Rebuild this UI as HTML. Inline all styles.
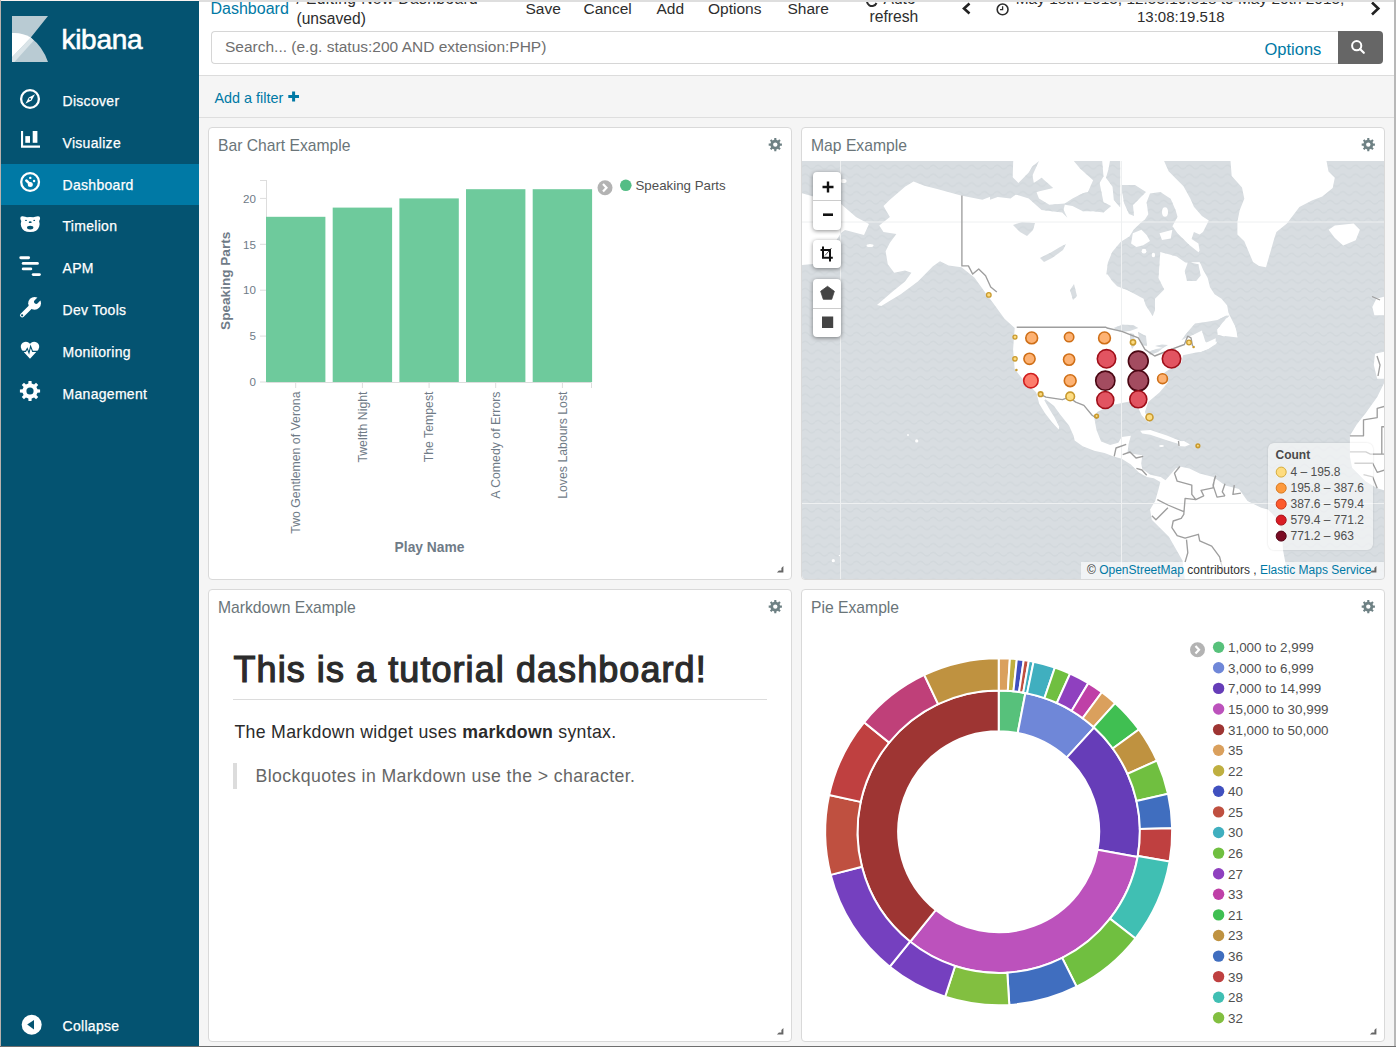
<!DOCTYPE html>
<html><head><meta charset="utf-8">
<style>
*{box-sizing:border-box;margin:0;padding:0}
html,body{width:1396px;height:1047px;overflow:hidden;background:#f5f5f5;font-family:"Liberation Sans",sans-serif;position:relative}
.abs{position:absolute}
#edgeL{left:0;top:0;width:1px;height:1047px;background:#b9b1ad}
#edgeT{left:0;top:0;width:1396px;height:1px;background:#fbf3f1}
#edgeR{left:1394px;top:0;width:2px;height:1047px;background:#b8b8b8}
#edgeB{left:0;top:1046px;width:1396px;height:1px;background:#6e6e6e}
#nav{left:1px;top:1px;width:198px;height:1045px;background:#045371}
.ni{position:absolute;left:0;width:198px;height:42px}
.ni .t{position:absolute;left:62px;font-size:14px;color:#fff;white-space:nowrap;line-height:16px}
.ni svg{position:absolute;left:19px}
#active{left:1px;top:164px;width:198px;height:41px;background:#0079a5}
#top{left:199px;top:1px;width:1195px;height:75px;background:#fff;border-bottom:1px solid #dcdcdc}
.txt{position:absolute;white-space:nowrap;line-height:1}
.nvt{left:62.5px;font-size:14px;color:#fff;letter-spacing:0.3px;-webkit-text-stroke:0.25px #fff}
.tm{top:0.5px;font-size:15.5px;color:#2d2d2d}
.mctl{background:#fff;border-radius:4px;box-shadow:0 1px 4px rgba(0,0,0,0.45)}
.panel{position:absolute;background:#fff;border:1px solid #d9d9d9;border-radius:4px;overflow:hidden}
.ptitle{position:absolute;left:9px;top:9px;font-size:15.7px;color:#6a7579;white-space:nowrap}
.gear{position:absolute;top:10px}
.resz{position:absolute;width:5px;height:5px;border-right:2px solid #666;border-bottom:2px solid #666}
</style></head><body>
<div id="edgeT" class="abs"></div>
<div id="edgeL" class="abs"></div>
<div id="edgeR" class="abs"></div>
<div id="edgeB" class="abs"></div>

<!-- NAV -->
<div id="nav" class="abs"></div>
<div id="active" class="abs"></div>

<svg class="abs" style="left:12px;top:16px" width="36" height="46" viewBox="0 0 36 46">
  <path d="M0,0 H36 L18.8,21.5 Q31,31 36,46 H0 Z" fill="#b9cbd3"/>
  <path d="M0,17 Q10,16.2 18.8,21.5 L0,41.3 Z" fill="#ffffff"/>
  <path d="M18.8,21.5 L21.8,24.6 L2.4,46 H0 V41.3 Z" fill="#dae4e8"/>
</svg>
<div class="txt" style="left:61.5px;top:26px;font-size:28px;color:#fff;letter-spacing:-0.3px;-webkit-text-stroke:0.6px #fff">kibana</div>

<!-- discover -->
<svg class="abs" style="left:18px;top:87px" width="24" height="24" viewBox="0 0 24 24">
  <circle cx="12" cy="12" r="8.9" fill="none" stroke="#fff" stroke-width="2.3"/>
  <path d="M7.4,16.7 L10.8,10.57 L17,7.35 L13.6,13.43 Z" fill="#fff"/>
  <circle cx="12" cy="12" r="1" fill="#045371"/>
</svg>
<!-- visualize -->
<svg class="abs" style="left:18px;top:129px" width="24" height="24" viewBox="0 0 24 24">
  <path d="M3,2 H5.1 V16.5 H22 V18.8 H3 Z" fill="#fff"/>
  <rect x="7.3" y="7.1" width="4.7" height="6.7" fill="#fff"/>
  <rect x="14.7" y="2" width="4.7" height="11.8" fill="#fff"/>
</svg>
<!-- dashboard -->
<svg class="abs" style="left:18px;top:170px" width="24" height="24" viewBox="0 0 24 24">
  <circle cx="12.1" cy="12" r="8.9" fill="none" stroke="#fff" stroke-width="2.3"/>
  <path d="M8.3,10.5 L12.3,14.3" stroke="#fff" stroke-width="2.5" stroke-linecap="round"/>
  <circle cx="12.3" cy="14.6" r="2.5" fill="#fff"/>
  <circle cx="12.3" cy="7.9" r="1.2" fill="#fff"/>
  <circle cx="16.1" cy="11" r="1.2" fill="#fff"/>
</svg>
<!-- timelion -->
<svg class="abs" style="left:18px;top:212px" width="24" height="24" viewBox="0 0 24 24">
  <path d="M2.3,6.2 Q2.2,4 4.6,4.2 Q7.5,4.5 9,5.3 Q12,4.5 15.3,5.3 Q17,4.5 19.8,4.2 Q22.2,4 22.1,6.2 Q22,7.8 21.1,9 Q22,11.5 21.2,14.4 Q19.5,19.9 12.2,20.1 Q4.9,19.9 3.2,14.4 Q2.4,11.5 3.3,9 Q2.4,7.8 2.3,6.2 Z" fill="#fff"/>
  <ellipse cx="8" cy="8.4" rx="0.9" ry="0.6" fill="#045371"/>
  <ellipse cx="16.2" cy="8.4" rx="0.9" ry="0.6" fill="#045371"/>
  <ellipse cx="12.2" cy="10.2" rx="1.5" ry="0.9" fill="#045371"/>
  <ellipse cx="12.2" cy="15.6" rx="3.2" ry="1.9" fill="#045371"/>
</svg>
<!-- apm -->
<svg class="abs" style="left:18px;top:254px" width="24" height="24" viewBox="0 0 24 24">
  <g stroke="#fff" stroke-width="2.9" stroke-linecap="round">
  <path d="M2.8,3.7 H10.6"/><path d="M5.2,9.4 H19.4"/><path d="M5.2,14.9 H12.8"/><path d="M15.2,20.6 H21.4"/>
  </g>
</svg>
<!-- dev tools -->
<svg class="abs" style="left:18px;top:295px" width="24" height="24" viewBox="0 0 24 24">
  <path d="M4.2,20.2 L13.5,11" stroke="#fff" stroke-width="4.4" stroke-linecap="round"/>
  <circle cx="16.6" cy="8.3" r="6.4" fill="#fff"/>
  <path d="M18.2,6.7 L24,0.9" stroke="#045371" stroke-width="4.2" stroke-linecap="round"/>
  <circle cx="4.1" cy="20.3" r="1.1" fill="#045371"/>
</svg>
<!-- monitoring -->
<svg class="abs" style="left:18px;top:339px" width="24" height="24" viewBox="0 0 24 24">
  <path d="M12,4.7 Q9.5,2 6.5,2.9 Q2.4,4 2.8,8.3 Q3.2,11 5.5,12.7 L12,19.8 L18.5,12.7 Q20.8,11 21.2,8.3 Q21.6,4 17.5,2.9 Q14.5,2 12,4.7 Z" fill="#fff"/>
  <path d="M3.5,12.4 H7.6 L9.3,9.5 L11,14 L12.6,7.4 L14.6,12.4 H20.5" fill="none" stroke="#045371" stroke-width="1.1"/>
</svg>
<!-- management -->
<svg class="abs" style="left:18px;top:379px" width="24" height="24" viewBox="0 0 24 24">
  <path d="M10.33,4.58 L10.47,1.91 L13.53,1.91 L13.67,4.58 L16.07,5.58 L18.05,3.79 L20.21,5.95 L18.42,7.93 L19.42,10.33 L22.09,10.47 L22.09,13.53 L19.42,13.67 L18.42,16.07 L20.21,18.05 L18.05,20.21 L16.07,18.42 L13.67,19.42 L13.53,22.09 L10.47,22.09 L10.33,19.42 L7.93,18.42 L5.95,20.21 L3.79,18.05 L5.58,16.07 L4.58,13.67 L1.91,13.53 L1.91,10.47 L4.58,10.33 L5.58,7.93 L3.79,5.95 L5.95,3.79 L7.93,5.58 Z M12,8.4 A3.6,3.6 0 1 0 12,15.6 A3.6,3.6 0 1 0 12,8.4 Z" fill="#fff" fill-rule="evenodd"/>
</svg>
<div class="txt nvt" style="top:93.6px">Discover</div>
<div class="txt nvt" style="top:135.5px">Visualize</div>
<div class="txt nvt" style="top:178.3px">Dashboard</div>
<div class="txt nvt" style="top:219.2px">Timelion</div>
<div class="txt nvt" style="top:261.0px">APM</div>
<div class="txt nvt" style="top:302.9px">Dev Tools</div>
<div class="txt nvt" style="top:344.7px">Monitoring</div>
<div class="txt nvt" style="top:386.6px">Management</div>
<svg class="abs" style="left:21px;top:1014px" width="22" height="22" viewBox="0 0 22 22"><circle cx="10.7" cy="10.8" r="10" fill="#fff"/><path d="M6.2,10.6 L13,5.9 V15.4 Z" fill="#045371"/></svg>
<div class="txt nvt" style="top:1018.8px">Collapse</div>


<!-- TOP -->
<div id="top" class="abs"></div>
<div class="txt" style="left:210.5px;top:0.5px;font-size:16px;color:#0079a5">Dashboard</div>
<div class="txt" style="left:296.5px;top:-9.3px;font-size:15.6px;color:#2d2d2d;letter-spacing:0.4px">/ Editing New Dashboard</div>
<div class="txt" style="left:296.5px;top:10.5px;font-size:15.6px;color:#2d2d2d">(unsaved)</div>
<div class="txt tm" style="left:525.5px">Save</div>
<div class="txt tm" style="left:583.5px">Cancel</div>
<div class="txt tm" style="left:656.5px">Add</div>
<div class="txt tm" style="left:708px">Options</div>
<div class="txt tm" style="left:787.5px">Share</div>
<svg class="abs" style="left:865px;top:-6px" width="14" height="14" viewBox="0 0 14 14"><path d="M10.5,3.5 A5,5 0 1 0 11.5,9" fill="none" stroke="#2d2d2d" stroke-width="2"/></svg>
<div class="txt" style="left:883.5px;top:-9px;font-size:15.6px;color:#2d2d2d">Auto-</div>
<div class="txt" style="left:869.5px;top:8.5px;font-size:15.7px;color:#2d2d2d">refresh</div>
<svg class="abs" style="left:960px;top:2px" width="13" height="13" viewBox="0 0 13 13"><path d="M9.5,1.5 L4,6.5 L9.5,11.5" fill="none" stroke="#222" stroke-width="2.6"/></svg>
<svg class="abs" style="left:995px;top:2px" width="15" height="15" viewBox="0 0 15 15"><circle cx="7.6" cy="7.4" r="5.4" fill="none" stroke="#2d2d2d" stroke-width="1.6"/><path d="M7.6,4.2 V7.6 H5" fill="none" stroke="#2d2d2d" stroke-width="1.3"/></svg>
<div class="txt" style="left:1015.7px;top:-9px;font-size:15.45px;color:#2d2d2d">May 18th 2015, 12:53:19.518 to May 20th 2015,</div>
<div class="txt" style="left:1137px;top:8.5px;font-size:15px;color:#2d2d2d">13:08:19.518</div>
<svg class="abs" style="left:1369px;top:1px" width="13" height="15" viewBox="0 0 13 15"><path d="M3,1.5 L9.3,7.5 L3,13.5" fill="none" stroke="#222" stroke-width="2.6"/></svg>
<div class="abs" style="left:210.5px;top:31px;width:1128px;height:33px;border:1px solid #d6d6d6;border-right:none;border-radius:4px 0 0 4px;background:#fff"></div>
<div class="txt" style="left:225px;top:38.5px;font-size:15.5px;color:#6f6f6f">Search... (e.g. status:200 AND extension:PHP)</div>
<div class="txt" style="left:1264.5px;top:40.5px;font-size:16.5px;color:#0079a5">Options</div>
<div class="abs" style="left:1338px;top:31px;width:45px;height:33px;background:#666;border-radius:0 4px 4px 0"></div>
<svg class="abs" style="left:1350px;top:39px" width="18" height="18" viewBox="0 0 18 18"><circle cx="6.7" cy="6.7" r="4.6" fill="none" stroke="#fff" stroke-width="2"/><path d="M10,10 L13.8,13.8" stroke="#fff" stroke-width="2.2" stroke-linecap="round"/></svg>

<div class="abs" style="left:199px;top:0;width:1195px;height:1.5px;background:#dedede"></div>
<!-- FILTER BAR -->
<div class="abs" style="left:199px;top:117px;width:1195px;height:1px;background:#dedede"></div>
<div class="txt" style="left:214.5px;top:91px;font-size:14.4px;color:#0079a5">Add a filter</div>
<svg class="abs" style="left:288px;top:91px" width="12" height="11" viewBox="0 0 12 11"><path d="M5.6,0.5 V10.5 M0.3,5.5 H11" stroke="#0079a5" stroke-width="3"/></svg>

<!-- PANELS -->
<div class="panel" id="p1" style="left:208px;top:127px;width:584px;height:453px">
  <div class="ptitle">Bar Chart Example</div>
</div>
<div class="panel" id="p2" style="left:801px;top:127px;width:584px;height:453px">
  <div class="ptitle">Map Example</div>
</div>
<div class="panel" id="p3" style="left:208px;top:589px;width:584px;height:453px">
  <div class="ptitle">Markdown Example</div>
</div>
<div class="panel" id="p4" style="left:801px;top:589px;width:584px;height:453px">
  <div class="ptitle">Pie Example</div>
</div>
<!-- MAP START -->
<div class="abs" style="left:802px;top:161px;width:582px;height:418px;overflow:hidden;border-radius:0 0 4px 4px;background:#d8dde1">
<svg class="abs" style="left:-802px;top:-161px" width="1396" height="1047">
<defs><pattern id="wv" patternUnits="userSpaceOnUse" width="12.8" height="8.8" x="802" y="161"><path d="M0,6 Q3.2,2.2 6.4,6 T12.8,6" fill="none" stroke="#d2d8dc" stroke-width="1.4"/></pattern></defs>
<rect x="802" y="161" width="582" height="418" fill="url(#wv)"/>
<path d="M883.5,206.1 L889.9,199.7 L905.0,186.8 L913.6,181.4 L924.3,185.7 L937.2,188.9 L960.9,195.4 L982.4,199.7 L999.5,193.2 L1012.4,186.8 L1013.2,161.0 L1164.1,161.0 L1168.6,171.3 L1175.5,178.2 L1183.5,186.2 L1190.4,198.8 L1193.9,206.8 L1201.9,216.0 L1208.8,220.6 L1203.0,232.1 L1199.6,234.4 L1193.9,232.1 L1191.6,239.0 L1198.4,243.5 L1199.6,250.4 L1196.2,256.1 L1200.9,264.4 L1203.2,270.1 L1207.7,278.1 L1210.0,287.3 L1214.6,294.2 L1221.5,298.8 L1227.2,305.6 L1228.4,312.5 L1230.0,316.0 L1235.0,326.0 L1237.5,337.5 L1225.0,336.0 L1218.0,340.0 L1216.0,344.0 L1208.0,349.0 L1200.0,352.0 L1196.0,352.5 L1183.0,355.3 L1181.3,363.1 L1168.4,370.0 L1164.6,372.5 L1164.6,379.1 L1167.9,382.4 L1159.7,392.3 L1148.2,402.1 L1144.9,412.0 L1149.8,423.6 L1146.0,420.0 L1141.6,415.3 L1135.0,400.5 L1121.8,403.0 L1110.3,405.4 L1097.1,412.0 L1094.2,417.5 L1096.5,430.1 L1101.1,441.6 L1110.2,445.0 L1118.3,442.7 L1121.7,437.0 L1130.9,435.8 L1128.6,443.9 L1127.4,453.0 L1142.3,455.3 L1141.2,463.4 L1142.3,469.1 L1150.3,474.8 L1160.7,477.1 L1165.5,480.3 L1175.7,468.4 L1180.9,466.7 L1189.4,468.4 L1199.7,473.5 L1213.3,476.9 L1225.3,485.5 L1239.0,488.9 L1247.5,500.9 L1261.2,507.7 L1268.0,509.4 L1278.0,520.0 L1282.0,532.0 L1283.0,550.0 L1286.0,566.0 L1291.0,580.0 L1185.0,580.0 L1182.6,560.7 L1168.9,536.8 L1151.8,519.7 L1150.1,509.4 L1155.2,500.9 L1158.6,488.9 L1160.3,482.1 L1153.8,478.3 L1146.9,477.1 L1138.9,472.5 L1130.9,464.5 L1121.7,458.8 L1113.7,456.5 L1104.5,453.0 L1094.2,450.7 L1082.7,446.2 L1074.7,440.4 L1073.6,435.8 L1069.0,425.5 L1059.8,414.1 L1054.1,406.0 L1045.5,399.2 L1044.3,400.3 L1048.9,408.3 L1054.6,417.5 L1059.2,426.7 L1058.7,429.5 L1051.8,422.1 L1044.9,412.9 L1039.2,403.8 L1036.9,394.6 L1036.1,392.3 L1021.3,377.4 L1014.7,369.2 L1013.1,349.4 L1014.7,328.0 L1004.5,318.8 L993.3,303.3 L985.6,293.0 L974.4,277.5 L961.5,267.2 L948.6,265.5 L940.0,261.2 L932.9,266.3 L917.9,281.4 L900.7,294.2 L881.3,306.1 L877.0,305.0 L892.1,292.1 L905.0,281.4 L911.4,272.8 L905.0,270.6 L894.2,272.8 L887.8,264.2 L885.6,251.3 L889.9,242.7 L896.4,234.1 L883.5,231.9 L879.2,225.5 L889.9,216.9 Z" fill="#fff"/>
<path d="M801.0,193.0 L815.0,197.0 L841.0,204.0 L856.0,217.0 L869.0,224.0 L864.0,235.0 L845.0,230.0 L841.0,233.0 L830.0,250.0 L813.0,264.0 L801.0,265.0 Z" fill="#fff"/>
<path d="M1230.5,161.0 L1231.7,175.9 L1242.0,187.4 L1244.3,198.8 L1239.7,210.3 L1237.4,221.7 L1237.4,234.4 L1244.3,241.2 L1253.0,262.0 L1259.0,266.0 L1266.0,267.3 L1270.2,252.7 L1274.4,238.1 L1276.4,231.9 L1286.9,223.5 L1299.4,206.9 L1311.9,200.6 L1322.3,196.4 L1332.7,188.1 L1334.8,177.7 L1328.5,171.4 L1326.5,161.0 Z" fill="#fff"/>
<path d="M1328.6,229.8 L1334.8,225.6 L1353.6,223.5 L1359.9,229.8 L1355.7,240.2 L1343.2,245.4 L1334.8,238.1 Z" fill="#fff"/>
<path d="M1372.3,306.9 L1376.5,298.6 L1385.0,296.5 L1385.0,315.3 L1374.4,315.3 Z" fill="#fff"/>
<path d="M1375.0,353.7 L1385.0,351.4 L1385.0,378.8 L1377.2,378.8 L1373.8,365.1 Z" fill="#fff"/>
<path d="M1385.0,381.1 L1377.2,397.0 L1365.8,413.0 L1356.7,424.4 L1349.9,435.8 L1349.9,456.4 L1352.1,467.8 L1365.8,481.5 L1377.2,488.3 L1385.0,490.6 Z" fill="#fff"/>
<path d="M990.0,161.0 L1013.2,161.0 L1009.3,173.9 L1018.4,182.9 L1028.7,172.6 L1032.5,166.2 L1039.0,161.0 L1032.5,175.2 L1033.8,182.9 L1041.6,177.8 L1053.2,188.1 L1036.4,191.9 L1039.0,198.4 L1049.3,204.8 L1064.8,203.5 L1072.5,198.4 L1082.8,193.2 L1088.0,191.9 L1093.1,180.3 L1080.3,168.7 L1073.8,161.0 L1102.2,161.0 L1103.5,176.5 L1099.6,182.9 L1103.5,202.3 L1111.2,206.1 L1103.5,212.6 L1093.1,211.3 L1082.8,211.3 L1072.5,206.1 L1064.8,204.8 L1063.5,210.0 L1067.4,217.7 L1062.2,212.6 L1041.6,210.0 L1028.7,198.4 L1015.8,194.5 L1010.6,198.4 L997.7,197.1 L990.0,199.7 ZM1109.9,161.0 L1120.2,161.0 L1120.2,207.4 L1113.8,199.7 L1112.5,186.8 L1106.0,177.8 L1108.6,168.7 ZM1121.0,185.0 L1135.0,185.0 L1146.0,192.0 L1138.0,200.0 L1133.0,205.0 L1134.0,216.0 L1129.0,214.0 L1124.0,203.0 ZM1106.2,275.0 L1107.9,262.4 L1112.2,252.1 L1120.8,241.8 L1129.4,236.6 L1133.7,229.7 L1139.7,223.7 L1144.9,219.4 L1148.3,214.2 L1146.6,202.2 L1150.0,193.6 L1160.3,191.9 L1170.7,198.8 L1175.8,210.8 L1177.5,216.8 L1172.4,226.3 L1177.5,233.2 L1189.6,245.2 L1198.2,252.1 L1203.0,256.0 L1202.5,262.0 L1185.3,262.4 L1176.7,256.4 L1160.3,252.1 L1159.6,262.1 L1158.5,278.1 L1164.2,289.6 L1155.0,298.8 L1155.0,310.2 L1152.7,316.0 L1145.8,305.6 L1143.6,298.8 L1128.7,290.7 L1117.2,286.2 L1112.6,281.6 L1106.9,273.6 ZM1188.1,261.9 L1198.4,264.2 L1200.7,275.6 L1196.2,281.0 L1187.0,281.0 L1184.7,271.0 ZM1181.3,340.3 L1188.2,331.3 L1195.0,323.5 L1207.1,321.8 L1217.4,320.1 L1226.0,315.8 L1229.4,315.8 L1222.5,322.7 L1217.4,329.6 L1217.4,334.7 L1224.3,336.4 L1220.8,341.6 L1215.7,341.6 L1208.8,345.0 L1205.3,341.6 L1201.9,330.4 L1195.0,333.9 L1188.2,336.9 ZM1113.6,328.0 L1122.0,324.7 L1133.0,325.0 L1138.3,328.0 L1130.0,331.0 L1120.0,332.0 ZM1130.0,333.0 L1134.0,334.0 L1135.0,345.0 L1132.0,349.0 L1130.0,342.0 ZM1138.0,332.0 L1146.0,336.0 L1147.0,346.0 L1142.0,345.0 L1139.0,338.0 ZM1148.0,352.0 L1156.0,349.0 L1163.0,348.0 L1158.0,352.0 L1150.0,355.0 ZM1155.0,346.0 L1162.0,344.5 L1168.0,345.0 L1163.0,348.0 ZM1070.0,290.0 L1074.0,284.0 L1077.0,296.0 L1073.0,300.0 ZM1013.0,225.0 L1022.0,222.0 L1035.0,223.0 L1033.0,230.0 L1027.0,236.0 L1020.0,232.0 ZM1040.0,258.0 L1050.0,253.0 L1060.0,247.0 L1066.0,244.0 L1063.0,250.0 L1052.0,258.0 L1044.0,262.0 Z" fill="#d8dde1"/>
<path d="M990.0,161.0 L1013.2,161.0 L1009.3,173.9 L1018.4,182.9 L1028.7,172.6 L1032.5,166.2 L1039.0,161.0 L1032.5,175.2 L1033.8,182.9 L1041.6,177.8 L1053.2,188.1 L1036.4,191.9 L1039.0,198.4 L1049.3,204.8 L1064.8,203.5 L1072.5,198.4 L1082.8,193.2 L1088.0,191.9 L1093.1,180.3 L1080.3,168.7 L1073.8,161.0 L1102.2,161.0 L1103.5,176.5 L1099.6,182.9 L1103.5,202.3 L1111.2,206.1 L1103.5,212.6 L1093.1,211.3 L1082.8,211.3 L1072.5,206.1 L1064.8,204.8 L1063.5,210.0 L1067.4,217.7 L1062.2,212.6 L1041.6,210.0 L1028.7,198.4 L1015.8,194.5 L1010.6,198.4 L997.7,197.1 L990.0,199.7 ZM1109.9,161.0 L1120.2,161.0 L1120.2,207.4 L1113.8,199.7 L1112.5,186.8 L1106.0,177.8 L1108.6,168.7 ZM1121.0,185.0 L1135.0,185.0 L1146.0,192.0 L1138.0,200.0 L1133.0,205.0 L1134.0,216.0 L1129.0,214.0 L1124.0,203.0 ZM1106.2,275.0 L1107.9,262.4 L1112.2,252.1 L1120.8,241.8 L1129.4,236.6 L1133.7,229.7 L1139.7,223.7 L1144.9,219.4 L1148.3,214.2 L1146.6,202.2 L1150.0,193.6 L1160.3,191.9 L1170.7,198.8 L1175.8,210.8 L1177.5,216.8 L1172.4,226.3 L1177.5,233.2 L1189.6,245.2 L1198.2,252.1 L1203.0,256.0 L1202.5,262.0 L1185.3,262.4 L1176.7,256.4 L1160.3,252.1 L1159.6,262.1 L1158.5,278.1 L1164.2,289.6 L1155.0,298.8 L1155.0,310.2 L1152.7,316.0 L1145.8,305.6 L1143.6,298.8 L1128.7,290.7 L1117.2,286.2 L1112.6,281.6 L1106.9,273.6 ZM1188.1,261.9 L1198.4,264.2 L1200.7,275.6 L1196.2,281.0 L1187.0,281.0 L1184.7,271.0 ZM1181.3,340.3 L1188.2,331.3 L1195.0,323.5 L1207.1,321.8 L1217.4,320.1 L1226.0,315.8 L1229.4,315.8 L1222.5,322.7 L1217.4,329.6 L1217.4,334.7 L1224.3,336.4 L1220.8,341.6 L1215.7,341.6 L1208.8,345.0 L1205.3,341.6 L1201.9,330.4 L1195.0,333.9 L1188.2,336.9 ZM1113.6,328.0 L1122.0,324.7 L1133.0,325.0 L1138.3,328.0 L1130.0,331.0 L1120.0,332.0 ZM1130.0,333.0 L1134.0,334.0 L1135.0,345.0 L1132.0,349.0 L1130.0,342.0 ZM1138.0,332.0 L1146.0,336.0 L1147.0,346.0 L1142.0,345.0 L1139.0,338.0 ZM1148.0,352.0 L1156.0,349.0 L1163.0,348.0 L1158.0,352.0 L1150.0,355.0 ZM1155.0,346.0 L1162.0,344.5 L1168.0,345.0 L1163.0,348.0 ZM1070.0,290.0 L1074.0,284.0 L1077.0,296.0 L1073.0,300.0 ZM1013.0,225.0 L1022.0,222.0 L1035.0,223.0 L1033.0,230.0 L1027.0,236.0 L1020.0,232.0 ZM1040.0,258.0 L1050.0,253.0 L1060.0,247.0 L1066.0,244.0 L1063.0,250.0 L1052.0,258.0 L1044.0,262.0 Z" fill="url(#wv)"/>
<path d="M1132.8,233.2 L1141.4,229.7 L1146.6,234.9 L1150.0,240.9 L1143.2,245.2 L1136.3,246.9 L1131.1,243.5 Z" fill="#fff"/>
<path d="M1159.5,233.2 L1172.4,229.7 L1170.7,238.4 L1162.0,240.0 Z" fill="#fff"/>
<path d="M1226.0,318.5 L1229.5,317.5 L1234.6,326.1 L1236.3,330.4 L1237.2,337.3 L1231.1,333.9 L1224.3,333.9 L1218.2,333.9 L1217.4,329.6 L1222.5,324.4 Z" fill="#fff"/>
<path d="M1196.8,351.9 L1200.2,345.0 L1208.8,341.6 L1215.7,338.2 L1215.7,343.3 L1208.8,348.5 L1200.2,351.9 Z" fill="#fff"/>
<path d="M1140.0,430.7 L1150.3,430.1 L1167.5,435.8 L1179.0,440.4 L1188.2,443.9 L1179.0,443.9 L1167.5,440.4 L1150.3,434.7 L1142.3,433.5 Z" fill="#fff"/>
<path d="M1177.9,441.5 L1184.0,441.0 L1190.0,444.5 L1185.0,446.5 L1178.0,446.0 Z" fill="#fff"/>
<ellipse cx="1165" cy="212" rx="3" ry="4.7" fill="#fff"/><circle cx="1144" cy="251.2" r="2.4" fill="#fff"/><ellipse cx="1153.4" cy="255" rx="1.7" ry="2.2" fill="#fff"/>
<ellipse cx="1161.5" cy="446" rx="2.4" ry="0.9" fill="#fff"/>
<ellipse cx="843.5" cy="181" rx="3" ry="2" fill="#fff"/>
<ellipse cx="870" cy="245.5" rx="3.5" ry="1.5" fill="#fff"/><circle cx="916.7" cy="440.9" r="1.6" fill="#fff"/><circle cx="908" cy="435" r="0.9" fill="#fff"/><circle cx="833.3" cy="560.7" r="1.6" fill="#fff"/><circle cx="839.5" cy="555.5" r="0.8" fill="#fff"/>
<path d="M840.5,161 V579 M1121.5,161 V579 M802,222 H1384 M802,503.5 H1384" stroke="#eef0f1" stroke-width="1"/>
<path d="M961.9,195.4 L961.9,265.9 L968.4,265.9 L972.7,274.1 L978.7,268.9 L985.6,275.8 L990.7,287.0 L996.8,292.1M1016.7,327.2 L1105.9,327.2 L1107.0,328.0 L1121.8,331.3 L1138.3,337.9 L1144.9,349.4 L1154.7,356.0 L1171.2,349.4 L1184.4,344.5 L1187.7,336.2 L1191.0,337.9 L1192.6,346.1M1039.4,393.9 L1046.0,397.2 L1062.5,399.7 L1069.1,397.2 L1075.7,402.1 L1083.9,405.4 L1092.1,415.3 L1097.1,418.6M1114.2,456.4 L1116.0,448.0 L1126.2,444.4M1122.7,454.7 L1130.0,452.0 L1136.0,458.0 L1143.2,456.4M1136.4,468.4 L1142.0,470.0 L1146.7,475.2M1179.8,466.5 L1174.5,473.2 L1177.2,481.2 L1191.8,485.1 L1191.8,494.4 L1195.8,499.7 L1203.7,495.8 L1201.1,490.4 L1213.0,487.8 L1214.3,479.8 L1215.7,475.8M1215.7,475.8 L1213.0,485.1 L1217.0,497.1 L1225.0,495.8M1225.0,483.8 L1222.3,491.8 L1225.0,495.8M1234.3,485.1 L1232.9,494.4 L1240.9,493.1M1195.8,499.7 L1185.1,498.4 L1183.8,514.3 L1181.2,518.3 L1173.2,521.0 L1171.9,527.6 L1177.2,535.6 L1185.1,538.2 L1198.4,534.3 L1199.7,540.9 L1211.7,546.2 L1219.6,556.8 L1223.6,572.7M1157.3,499.7 L1167.9,505.0 L1183.8,511.7M1151.9,515.7 L1155.9,519.7 L1167.9,507.7M1186.5,539.6 L1187.8,552.8 L1185.1,562.1M1178.5,441.0 L1179.0,446.0M1349.9,435.8 L1363.5,435.8 L1363.5,419.9 L1377.2,417.6 L1377.2,408.4 L1385.0,406.2M1385.0,426.7 L1381.8,426.7 L1381.8,454.1M1349.9,451.8 L1365.8,451.8 L1370.4,454.1 L1385.0,454.1M1354.4,463.2 L1372.7,463.2 L1377.2,472.3 L1385.0,470.0M1363.5,474.6 L1372.7,476.9 L1377.2,488.3M1377.0,356.0 L1380.0,365.0 L1378.0,376.0M1372.0,296.5 L1380.0,300.0" fill="none" stroke="#9e9e9e" stroke-width="1.35" stroke-linejoin="round"/>
</svg></div>
<svg class="abs" style="left:0;top:0" width="1396" height="1047" font-family="Liberation Sans">
<circle cx="988.8" cy="294.9" r="2.3" fill="#fedb7d" stroke="#c99a2e" stroke-width="1.3"/>
<circle cx="1015" cy="337.1" r="2.0" fill="#fedb7d" stroke="#c99a2e" stroke-width="1.3"/>
<circle cx="1031.7" cy="337.9" r="5.9" fill="#fdae6b" fill-opacity="0.95" stroke="#cf6f17" stroke-width="1.6"/>
<circle cx="1069.1" cy="337.1" r="4.7" fill="#fdae6b" fill-opacity="0.95" stroke="#cf6f17" stroke-width="1.6"/>
<circle cx="1104.5" cy="337.9" r="5.9" fill="#fdae6b" fill-opacity="0.95" stroke="#cf6f17" stroke-width="1.6"/>
<circle cx="1133" cy="342.3" r="2.6" fill="#fedb7d" fill-opacity="0.95" stroke="#c99a2e" stroke-width="1.6"/>
<circle cx="1189" cy="342.5" r="2.3" fill="#fedb7d" stroke="#c99a2e" stroke-width="1.3"/>
<circle cx="1193.6" cy="347" r="1.3" fill="#c99a2e"/>
<circle cx="1015" cy="358.8" r="2.2" fill="#fedb7d" stroke="#c99a2e" stroke-width="1.3"/>
<circle cx="1029.5" cy="358.8" r="5.6" fill="#fdae6b" fill-opacity="0.95" stroke="#cf6f17" stroke-width="1.6"/>
<circle cx="1069.1" cy="359.6" r="5.6" fill="#fdae6b" fill-opacity="0.95" stroke="#cf6f17" stroke-width="1.6"/>
<circle cx="1106.5" cy="358.8" r="9.2" fill="#e04b58" fill-opacity="0.95" stroke="#a00f19" stroke-width="1.6"/>
<circle cx="1138.3" cy="361" r="9.9" fill="#9e4257" fill-opacity="0.95" stroke="#4a0713" stroke-width="1.6"/>
<circle cx="1171.5" cy="358.8" r="9.2" fill="#e04b58" fill-opacity="0.95" stroke="#a00f19" stroke-width="1.6"/>
<circle cx="1016.4" cy="370" r="1.3" fill="#c99a2e"/>
<circle cx="1030.9" cy="380.7" r="7.2" fill="#fd7664" fill-opacity="0.95" stroke="#d01f1f" stroke-width="1.6"/>
<circle cx="1070.2" cy="380.7" r="5.9" fill="#fdae6b" fill-opacity="0.95" stroke="#cf6f17" stroke-width="1.6"/>
<circle cx="1105.3" cy="380.7" r="9.6" fill="#9e4257" fill-opacity="0.95" stroke="#4a0713" stroke-width="1.6"/>
<circle cx="1138.3" cy="380.7" r="10.2" fill="#9e4257" fill-opacity="0.95" stroke="#4a0713" stroke-width="1.6"/>
<circle cx="1162.5" cy="378.7" r="4.9" fill="#fdae6b" fill-opacity="0.95" stroke="#cf6f17" stroke-width="1.6"/>
<circle cx="1040.6" cy="394.2" r="2.3" fill="#fedb7d" fill-opacity="0.95" stroke="#c99a2e" stroke-width="1.6"/>
<circle cx="1070.2" cy="396.4" r="4.3" fill="#fedb7d" fill-opacity="0.95" stroke="#c99a2e" stroke-width="1.6"/>
<circle cx="1105.3" cy="400" r="8.5" fill="#e04b58" fill-opacity="0.95" stroke="#a00f19" stroke-width="1.6"/>
<circle cx="1138.3" cy="399.3" r="8.5" fill="#e04b58" fill-opacity="0.95" stroke="#a00f19" stroke-width="1.6"/>
<circle cx="1096.6" cy="416.1" r="1.8" fill="#fedb7d" fill-opacity="0.95" stroke="#c99a2e" stroke-width="1.6"/>
<circle cx="1149.5" cy="417.3" r="3.5" fill="#fedb7d" fill-opacity="0.95" stroke="#c99a2e" stroke-width="1.6"/>
<circle cx="1197.9" cy="445.8" r="1.8" fill="#fedb7d" fill-opacity="0.95" stroke="#c99a2e" stroke-width="1.6"/>
</svg>
<div class="abs mctl" style="left:812.5px;top:171.5px;width:28.5px;height:58px"></div>
<div class="abs" style="left:813px;top:199.5px;width:27.5px;height:1px;background:#ccc"></div>
<div class="abs mctl" style="left:812.5px;top:239.5px;width:28.5px;height:28.5px"></div>
<div class="abs mctl" style="left:812.5px;top:279px;width:28.5px;height:58px"></div>
<div class="abs" style="left:813px;top:307.5px;width:27.5px;height:1px;background:#ccc"></div>
<svg class="abs" style="left:802px;top:161px" width="60" height="190">
 <path d="M20.5,26 H31.5 M26,20.5 V31.5" stroke="#111" stroke-width="2.4"/>
 <path d="M21,53.7 H31" stroke="#111" stroke-width="2.6"/>
 <path d="M21,85.5 V96.8 H30.8 M18.5,89 H28 V100.5" fill="none" stroke="#111" stroke-width="2"/>
 <path d="M23,94.5 L29.5,87" stroke="#111" stroke-width="0.7"/>
 <path d="M25.50,125.30 L32.35,130.28 L29.73,138.32 L21.27,138.32 L18.65,130.28 Z" fill="#444" stroke="#444" stroke-width="0.8" stroke-linejoin="round"/>
 <rect x="20" y="155.5" width="11.2" height="11.5" fill="#444"/>
</svg>

<div class="abs" style="left:1268px;top:443px;width:104.5px;height:106.5px;border-radius:6px;background:rgba(255,255,255,0.55);box-shadow:0 0 2px rgba(0,0,0,0.15)"></div>
<div class="txt" style="left:1275.5px;top:449px;font-size:12px;font-weight:bold;color:#4a4a4a">Count</div>
<svg class="abs" style="left:0;top:0" width="1396" height="1047" font-family="Liberation Sans">
<circle cx="1281.2" cy="472.1" r="5" fill="#fedc7f" stroke="#d6ad3e" stroke-width="1"/>
<text x="1290.5" y="476.4" font-size="12" fill="#4f4f4f">4 – 195.8</text>
<circle cx="1281.2" cy="488.1" r="5" fill="#fd9a3e" stroke="#d97a1e" stroke-width="1"/>
<text x="1290.5" y="492.4" font-size="12" fill="#4f4f4f">195.8 – 387.6</text>
<circle cx="1281.2" cy="504.1" r="5" fill="#fd5a2c" stroke="#cc3b1b" stroke-width="1"/>
<text x="1290.5" y="508.4" font-size="12" fill="#4f4f4f">387.6 – 579.4</text>
<circle cx="1281.2" cy="520.1" r="5" fill="#d91c24" stroke="#a8121b" stroke-width="1"/>
<text x="1290.5" y="524.4" font-size="12" fill="#4f4f4f">579.4 – 771.2</text>
<circle cx="1281.2" cy="536.1" r="5" fill="#7a0b24" stroke="#520516" stroke-width="1"/>
<text x="1290.5" y="540.4" font-size="12" fill="#4f4f4f">771.2 – 963</text>
</svg>
<div class="abs" style="left:1081px;top:562px;width:303px;height:17px;background:rgba(255,255,255,0.65);border-radius:0 0 4px 0"></div>
<div class="txt" style="left:1087px;top:563.5px;font-size:12px;color:#333">© <span style="color:#0079a5">OpenStreetMap</span> contributors , <span style="color:#0079a5">Elastic Maps Service</span></div>
<!-- MAP END -->
<!-- MARKDOWN -->
<div class="txt" style="left:233.5px;top:652px;font-size:36px;font-weight:normal;color:#2b2b2b;letter-spacing:1.07px;-webkit-text-stroke:1.2px #2b2b2b">This is a tutorial dashboard!</div>
<div class="abs" style="left:233px;top:699px;width:534px;height:1px;background:#dcdcdc"></div>
<div class="txt" style="left:234.5px;top:724px;font-size:17.7px;color:#2b2b2b;letter-spacing:0.3px">The Markdown widget uses <b>markdown</b> syntax.</div>
<div class="abs" style="left:233px;top:763px;width:4px;height:26px;background:#dcdcdc"></div>
<div class="txt" style="left:255.5px;top:768px;font-size:17.7px;color:#666;letter-spacing:0.4px">Blockquotes in Markdown use the &gt; character.</div>
<!-- BARCHART -->
<svg class="abs" style="left:0;top:0" width="1396" height="1047" font-family="Liberation Sans">
<path d="M266,180.5 H260 M266.5,180 V382.5 H591.5 V388" fill="none" stroke="#ddd" stroke-width="1"/>
<path d="M260,382.0 H266" stroke="#ddd" stroke-width="1"/>
<text x="256" y="386.2" text-anchor="end" font-size="11.6" fill="#6f7b87">0</text>
<path d="M260,336.1 H266" stroke="#ddd" stroke-width="1"/>
<text x="256" y="340.3" text-anchor="end" font-size="11.6" fill="#6f7b87">5</text>
<path d="M260,290.2 H266" stroke="#ddd" stroke-width="1"/>
<text x="256" y="294.4" text-anchor="end" font-size="11.6" fill="#6f7b87">10</text>
<path d="M260,244.3 H266" stroke="#ddd" stroke-width="1"/>
<text x="256" y="248.5" text-anchor="end" font-size="11.6" fill="#6f7b87">15</text>
<path d="M260,198.4 H266" stroke="#ddd" stroke-width="1"/>
<text x="256" y="202.6" text-anchor="end" font-size="11.6" fill="#6f7b87">20</text>
<rect x="266.0" y="216.8" width="59.4" height="165.2" fill="#6eca9c"/>
<path d="M295.7,382.5 V388" stroke="#ddd" stroke-width="1"/>
<text transform="translate(300.0,391.5) rotate(-90)" text-anchor="end" font-size="12.3" fill="#6f7b87">Two Gentlemen of Verona</text>
<rect x="332.7" y="207.6" width="59.4" height="174.4" fill="#6eca9c"/>
<path d="M362.4,382.5 V388" stroke="#ddd" stroke-width="1"/>
<text transform="translate(366.7,391.5) rotate(-90)" text-anchor="end" font-size="12.3" fill="#6f7b87">Twelfth Night</text>
<rect x="399.4" y="198.4" width="59.4" height="183.6" fill="#6eca9c"/>
<path d="M429.1,382.5 V388" stroke="#ddd" stroke-width="1"/>
<text transform="translate(433.4,391.5) rotate(-90)" text-anchor="end" font-size="12.3" fill="#6f7b87">The Tempest</text>
<rect x="466.0" y="189.2" width="59.4" height="192.8" fill="#6eca9c"/>
<path d="M495.7,382.5 V388" stroke="#ddd" stroke-width="1"/>
<text transform="translate(500.0,391.5) rotate(-90)" text-anchor="end" font-size="12.3" fill="#6f7b87">A Comedy of Errors</text>
<rect x="532.7" y="189.2" width="59.4" height="192.8" fill="#6eca9c"/>
<path d="M562.4,382.5 V388" stroke="#ddd" stroke-width="1"/>
<text transform="translate(566.7,391.5) rotate(-90)" text-anchor="end" font-size="12.3" fill="#6f7b87">Loves Labours Lost</text>
<text transform="translate(229.6,280.8) rotate(-90)" text-anchor="middle" font-size="13.6" font-weight="bold" fill="#6f7b87">Speaking Parts</text>
<text x="429.5" y="551.7" text-anchor="middle" font-size="13.8" font-weight="bold" fill="#6f7b87">Play Name</text>
<circle cx="605" cy="187.7" r="7.5" fill="#b3b3b3"/><path d="M603,184 L606.5,187.7 L603,191.4" fill="none" stroke="#fff" stroke-width="2.2"/>
<circle cx="625.8" cy="185.3" r="5.8" fill="#54bd85"/>
<text x="635.5" y="189.9" font-size="13.3" fill="#505050">Speaking Parts</text>
</svg>
<!-- PIE -->
<svg class="abs" style="left:0;top:0" width="1396" height="1047" font-family="Liberation Sans">
<g stroke="#fff" stroke-width="2" stroke-linejoin="miter">
<path d="M998.70,690.50 A141.2,141.2 0 0 1 1025.40,693.05 L1017.70,733.01 A100.5,100.5 0 0 0 998.70,731.20 Z" fill="#57c17b"/>
<path d="M1025.40,693.05 A141.2,141.2 0 0 1 1094.09,727.60 L1066.60,757.60 A100.5,100.5 0 0 0 1017.70,733.01 Z" fill="#6f87d8"/>
<path d="M1094.09,727.60 A141.2,141.2 0 0 1 1137.62,856.95 L1097.58,849.67 A100.5,100.5 0 0 0 1066.60,757.60 Z" fill="#663db8"/>
<path d="M1137.62,856.95 A141.2,141.2 0 0 1 910.22,941.74 L935.73,910.02 A100.5,100.5 0 0 0 1097.58,849.67 Z" fill="#bc52bc"/>
<path d="M910.22,941.74 A141.2,141.2 0 0 1 998.70,690.50 L998.70,731.20 A100.5,100.5 0 0 0 935.73,910.02 Z" fill="#9e3533"/>
<path d="M998.70,658.20 A173.5,173.5 0 0 1 1009.90,658.56 L1007.81,690.79 A141.2,141.2 0 0 0 998.70,690.50 Z" fill="#daa05d"/>
<path d="M1009.90,658.56 A173.5,173.5 0 0 1 1016.84,659.15 L1013.46,691.27 A141.2,141.2 0 0 0 1007.81,690.79 Z" fill="#bfaf40"/>
<path d="M1016.84,659.15 A173.5,173.5 0 0 1 1023.75,660.02 L1019.08,691.98 A141.2,141.2 0 0 0 1013.46,691.27 Z" fill="#4050bf"/>
<path d="M1023.75,660.02 A173.5,173.5 0 0 1 1028.83,660.84 L1023.22,692.65 A141.2,141.2 0 0 0 1019.08,691.98 Z" fill="#bf5040"/>
<path d="M1028.83,660.84 A173.5,173.5 0 0 1 1033.59,661.74 L1027.09,693.38 A141.2,141.2 0 0 0 1023.22,692.65 Z" fill="#40afbf"/>
<path d="M1033.59,661.74 A173.5,173.5 0 0 1 1054.90,667.55 L1044.44,698.11 A141.2,141.2 0 0 0 1027.09,693.38 Z" fill="#40afbf"/>
<path d="M1054.90,667.55 A173.5,173.5 0 0 1 1070.10,673.57 L1056.81,703.01 A141.2,141.2 0 0 0 1044.44,698.11 Z" fill="#70bf40"/>
<path d="M1070.10,673.57 A173.5,173.5 0 0 1 1088.32,683.14 L1071.63,710.80 A141.2,141.2 0 0 0 1056.81,703.01 Z" fill="#8f40bf"/>
<path d="M1088.32,683.14 A173.5,173.5 0 0 1 1101.90,692.23 L1082.69,718.20 A141.2,141.2 0 0 0 1071.63,710.80 Z" fill="#bf40a7"/>
<path d="M1101.90,692.23 A173.5,173.5 0 0 1 1115.24,703.17 L1093.55,727.10 A141.2,141.2 0 0 0 1082.69,718.20 Z" fill="#daa05d"/>
<path d="M1115.24,703.17 A173.5,173.5 0 0 1 1138.89,729.47 L1112.79,748.51 A141.2,141.2 0 0 0 1093.55,727.10 Z" fill="#40bf52"/>
<path d="M1138.89,729.47 A173.5,173.5 0 0 1 1156.95,760.58 L1127.49,773.82 A141.2,141.2 0 0 0 1112.79,748.51 Z" fill="#bf9240"/>
<path d="M1156.95,760.58 A173.5,173.5 0 0 1 1168.02,793.85 L1136.50,800.90 A141.2,141.2 0 0 0 1127.49,773.82 Z" fill="#70bf40"/>
<path d="M1168.02,793.85 A173.5,173.5 0 0 1 1172.17,828.37 L1139.87,828.99 A141.2,141.2 0 0 0 1136.50,800.90 Z" fill="#406ebf"/>
<path d="M1172.17,828.37 A173.5,173.5 0 0 1 1169.62,861.53 L1137.80,855.98 A141.2,141.2 0 0 0 1139.87,828.99 Z" fill="#bf4040"/>
<path d="M1169.62,861.53 A173.5,173.5 0 0 1 1135.42,938.52 L1109.97,918.63 A141.2,141.2 0 0 0 1137.80,855.98 Z" fill="#40bfb3"/>
<path d="M1135.42,938.52 A173.5,173.5 0 0 1 1076.66,986.70 L1062.14,957.84 A141.2,141.2 0 0 0 1109.97,918.63 Z" fill="#70bf40"/>
<path d="M1076.66,986.70 A173.5,173.5 0 0 1 1009.29,1004.88 L1007.32,972.64 A141.2,141.2 0 0 0 1062.14,957.84 Z" fill="#406ebf"/>
<path d="M1009.29,1004.88 A173.5,173.5 0 0 1 945.09,996.71 L955.07,965.99 A141.2,141.2 0 0 0 1007.32,972.64 Z" fill="#82bf40"/>
<path d="M945.09,996.71 A173.5,173.5 0 0 1 889.75,966.73 L910.03,941.59 A141.2,141.2 0 0 0 955.07,965.99 Z" fill="#7540bf"/>
<path d="M889.75,966.73 A173.5,173.5 0 0 1 830.65,874.85 L861.94,866.82 A141.2,141.2 0 0 0 910.03,941.59 Z" fill="#7540bf"/>
<path d="M830.65,874.85 A173.5,173.5 0 0 1 829.12,795.04 L860.69,801.86 A141.2,141.2 0 0 0 861.94,866.82 Z" fill="#bf5040"/>
<path d="M829.12,795.04 A173.5,173.5 0 0 1 864.06,722.28 L889.12,742.65 A141.2,141.2 0 0 0 860.69,801.86 Z" fill="#bf4040"/>
<path d="M864.06,722.28 A173.5,173.5 0 0 1 924.28,674.97 L938.13,704.15 A141.2,141.2 0 0 0 889.12,742.65 Z" fill="#bf4079"/>
<path d="M924.28,674.97 A173.5,173.5 0 0 1 998.70,658.20 L998.70,690.50 A141.2,141.2 0 0 0 938.13,704.15 Z" fill="#bf9240"/>
</g>
<circle cx="1197.5" cy="649.7" r="7.5" fill="#b3b3b3"/><path d="M1195.5,646 L1199,649.7 L1195.5,653.4" fill="none" stroke="#fff" stroke-width="2.2"/>
<circle cx="1218.6" cy="647.2" r="5.7" fill="#57c17b"/>
<text x="1228" y="652.1" font-size="13.4" fill="#505050">1,000 to 2,999</text>
<circle cx="1218.6" cy="667.8" r="5.7" fill="#6f87d8"/>
<text x="1228" y="672.7" font-size="13.4" fill="#505050">3,000 to 6,999</text>
<circle cx="1218.6" cy="688.4" r="5.7" fill="#663db8"/>
<text x="1228" y="693.3" font-size="13.4" fill="#505050">7,000 to 14,999</text>
<circle cx="1218.6" cy="709.0" r="5.7" fill="#bc52bc"/>
<text x="1228" y="713.9" font-size="13.4" fill="#505050">15,000 to 30,999</text>
<circle cx="1218.6" cy="729.6" r="5.7" fill="#9e3533"/>
<text x="1228" y="734.5" font-size="13.4" fill="#505050">31,000 to 50,000</text>
<circle cx="1218.6" cy="750.2" r="5.7" fill="#daa05d"/>
<text x="1228" y="755.1" font-size="13.4" fill="#505050">35</text>
<circle cx="1218.6" cy="770.7" r="5.7" fill="#bfaf40"/>
<text x="1228" y="775.6" font-size="13.4" fill="#505050">22</text>
<circle cx="1218.6" cy="791.3" r="5.7" fill="#4050bf"/>
<text x="1228" y="796.2" font-size="13.4" fill="#505050">40</text>
<circle cx="1218.6" cy="811.9" r="5.7" fill="#bf5040"/>
<text x="1228" y="816.8" font-size="13.4" fill="#505050">25</text>
<circle cx="1218.6" cy="832.5" r="5.7" fill="#40afbf"/>
<text x="1228" y="837.4" font-size="13.4" fill="#505050">30</text>
<circle cx="1218.6" cy="853.1" r="5.7" fill="#70bf40"/>
<text x="1228" y="858.0" font-size="13.4" fill="#505050">26</text>
<circle cx="1218.6" cy="873.7" r="5.7" fill="#8f40bf"/>
<text x="1228" y="878.6" font-size="13.4" fill="#505050">27</text>
<circle cx="1218.6" cy="894.3" r="5.7" fill="#bf40a7"/>
<text x="1228" y="899.2" font-size="13.4" fill="#505050">33</text>
<circle cx="1218.6" cy="914.9" r="5.7" fill="#40bf52"/>
<text x="1228" y="919.8" font-size="13.4" fill="#505050">21</text>
<circle cx="1218.6" cy="935.5" r="5.7" fill="#bf9240"/>
<text x="1228" y="940.4" font-size="13.4" fill="#505050">23</text>
<circle cx="1218.6" cy="956.1" r="5.7" fill="#406ebf"/>
<text x="1228" y="961.0" font-size="13.4" fill="#505050">36</text>
<circle cx="1218.6" cy="976.6" r="5.7" fill="#bf4040"/>
<text x="1228" y="981.5" font-size="13.4" fill="#505050">39</text>
<circle cx="1218.6" cy="997.2" r="5.7" fill="#40bfb3"/>
<text x="1228" y="1002.1" font-size="13.4" fill="#505050">28</text>
<circle cx="1218.6" cy="1017.8" r="5.7" fill="#82bf40"/>
<text x="1228" y="1022.7" font-size="13.4" fill="#505050">32</text>
</svg>
<!-- GEARS -->
<svg class="abs" style="left:0;top:0" width="1396" height="1047"><path d="M774.23,139.72 L774.25,137.98 L776.35,137.98 L776.37,139.72 L778.00,140.39 L779.24,139.18 L780.72,140.66 L779.51,141.90 L780.18,143.53 L781.92,143.55 L781.92,145.65 L780.18,145.67 L779.51,147.30 L780.72,148.54 L779.24,150.02 L778.00,148.81 L776.37,149.48 L776.35,151.22 L774.25,151.22 L774.23,149.48 L772.60,148.81 L771.36,150.02 L769.88,148.54 L771.09,147.30 L770.42,145.67 L768.68,145.65 L768.68,143.55 L770.42,143.53 L771.09,141.90 L769.88,140.66 L771.36,139.18 L772.60,140.39 Z M775.3,142.4 A2.2,2.2 0 1 0 775.3,146.79999999999998 A2.2,2.2 0 1 0 775.3,142.4 Z" fill="#6e8184" fill-rule="evenodd"/>
<path d="M1367.23,139.72 L1367.25,137.98 L1369.35,137.98 L1369.37,139.72 L1371.00,140.39 L1372.24,139.18 L1373.72,140.66 L1372.51,141.90 L1373.18,143.53 L1374.92,143.55 L1374.92,145.65 L1373.18,145.67 L1372.51,147.30 L1373.72,148.54 L1372.24,150.02 L1371.00,148.81 L1369.37,149.48 L1369.35,151.22 L1367.25,151.22 L1367.23,149.48 L1365.60,148.81 L1364.36,150.02 L1362.88,148.54 L1364.09,147.30 L1363.42,145.67 L1361.68,145.65 L1361.68,143.55 L1363.42,143.53 L1364.09,141.90 L1362.88,140.66 L1364.36,139.18 L1365.60,140.39 Z M1368.3,142.4 A2.2,2.2 0 1 0 1368.3,146.79999999999998 A2.2,2.2 0 1 0 1368.3,142.4 Z" fill="#6e8184" fill-rule="evenodd"/>
<path d="M774.23,601.72 L774.25,599.98 L776.35,599.98 L776.37,601.72 L778.00,602.39 L779.24,601.18 L780.72,602.66 L779.51,603.90 L780.18,605.53 L781.92,605.55 L781.92,607.65 L780.18,607.67 L779.51,609.30 L780.72,610.54 L779.24,612.02 L778.00,610.81 L776.37,611.48 L776.35,613.22 L774.25,613.22 L774.23,611.48 L772.60,610.81 L771.36,612.02 L769.88,610.54 L771.09,609.30 L770.42,607.67 L768.68,607.65 L768.68,605.55 L770.42,605.53 L771.09,603.90 L769.88,602.66 L771.36,601.18 L772.60,602.39 Z M775.3,604.4 A2.2,2.2 0 1 0 775.3,608.8000000000001 A2.2,2.2 0 1 0 775.3,604.4 Z" fill="#6e8184" fill-rule="evenodd"/>
<path d="M1367.23,601.72 L1367.25,599.98 L1369.35,599.98 L1369.37,601.72 L1371.00,602.39 L1372.24,601.18 L1373.72,602.66 L1372.51,603.90 L1373.18,605.53 L1374.92,605.55 L1374.92,607.65 L1373.18,607.67 L1372.51,609.30 L1373.72,610.54 L1372.24,612.02 L1371.00,610.81 L1369.37,611.48 L1369.35,613.22 L1367.25,613.22 L1367.23,611.48 L1365.60,610.81 L1364.36,612.02 L1362.88,610.54 L1364.09,609.30 L1363.42,607.67 L1361.68,607.65 L1361.68,605.55 L1363.42,605.53 L1364.09,603.90 L1362.88,602.66 L1364.36,601.18 L1365.60,602.39 Z M1368.3,604.4 A2.2,2.2 0 1 0 1368.3,608.8000000000001 A2.2,2.2 0 1 0 1368.3,604.4 Z" fill="#6e8184" fill-rule="evenodd"/>
<path d="M783.4,572.5 V566.0 L781.4,568.0 V570.5 H778.9 L776.9,572.5 Z" fill="#666"/>
<path d="M783.4,1034.5 V1028.0 L781.4,1030.0 V1032.5 H778.9 L776.9,1034.5 Z" fill="#666"/>
<path d="M1376.4,572.5 V566.0 L1374.4,568.0 V570.5 H1371.9 L1369.9,572.5 Z" fill="#666"/>
<path d="M1376.4,1034.5 V1028.0 L1374.4,1030.0 V1032.5 H1371.9 L1369.9,1034.5 Z" fill="#666"/></svg>
</body></html>
